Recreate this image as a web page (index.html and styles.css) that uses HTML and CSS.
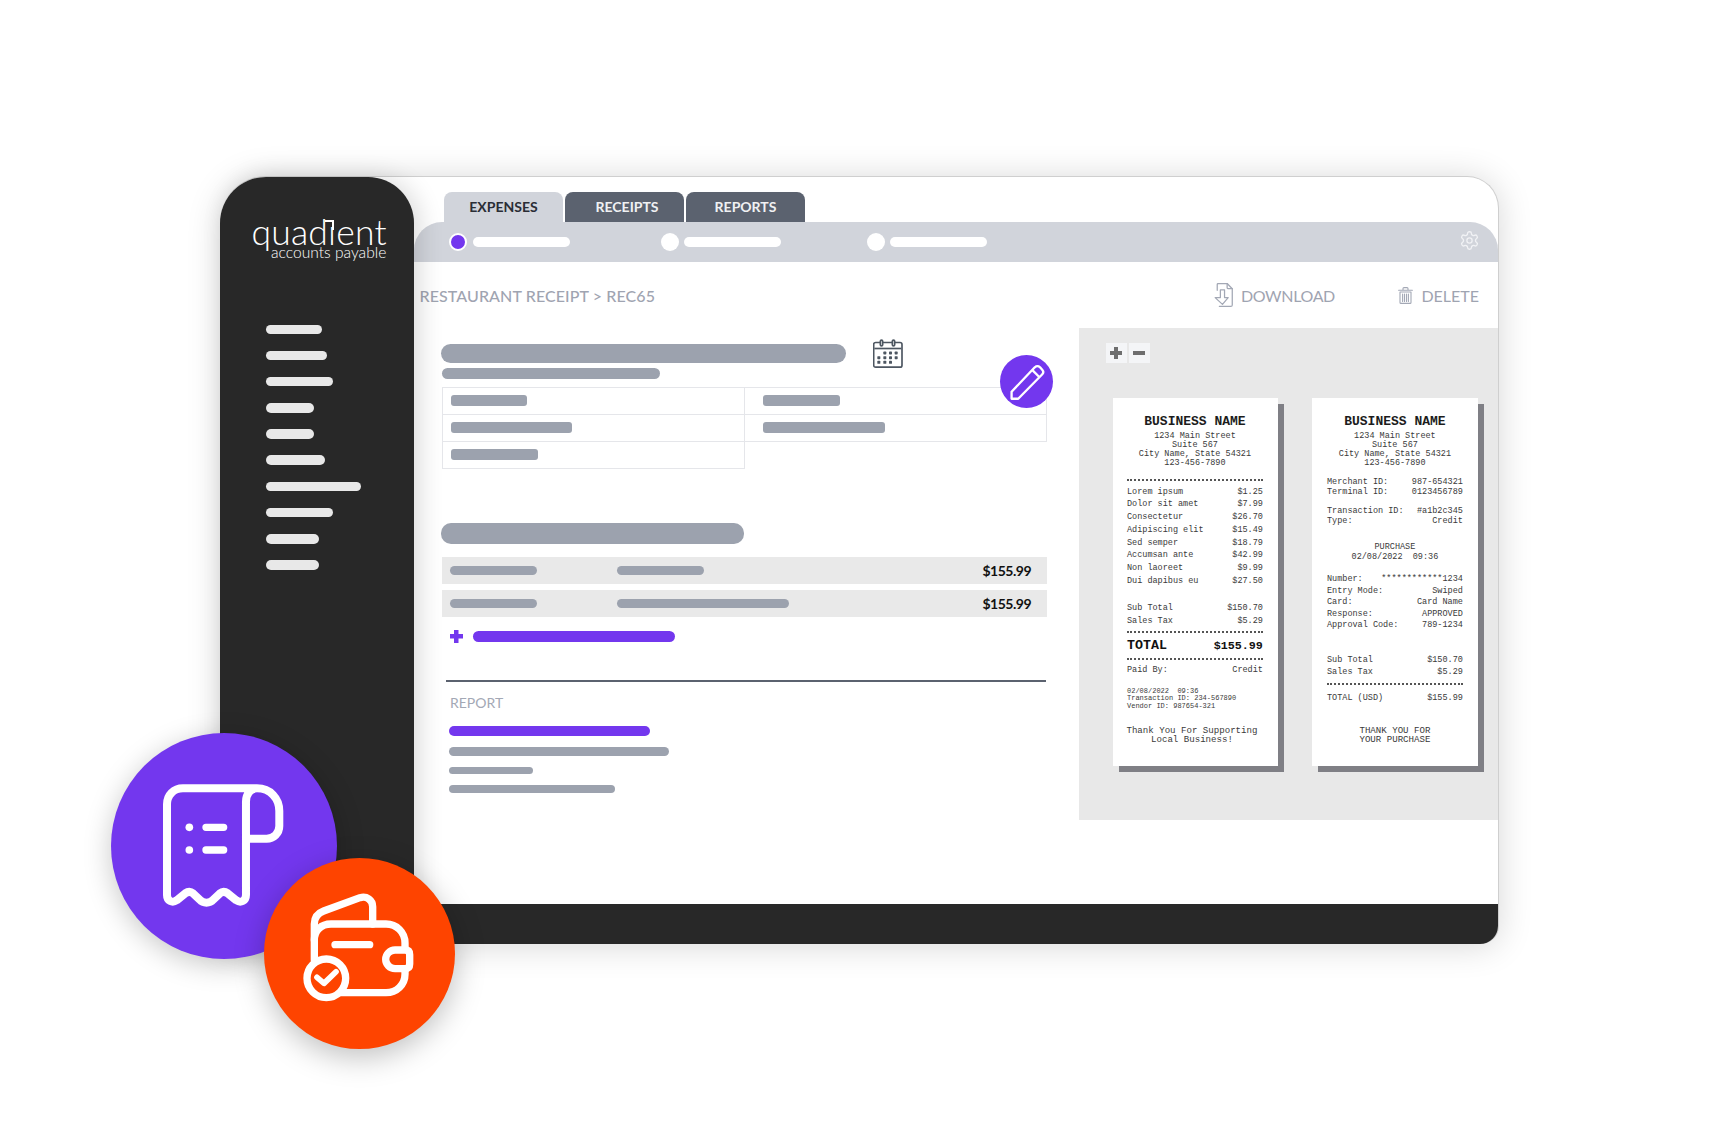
FILE: index.html
```html
<!DOCTYPE html>
<html lang="en">
<head>
<meta charset="utf-8">
<title>Quadient Accounts Payable</title>
<link rel="stylesheet" href="styles.css">
</head>
<body>
<div class="canvas">
  <div class="window">
    <aside class="sidebar">
      <div class="logo">
        <div class="logo-name">quad<span class="logo-i">ı</span>ent</div>
        <div class="logo-sub">accounts payable</div>
      </div>
      <nav class="side-nav">
        <span class="side-bar w56"></span>
        <span class="side-bar w61"></span>
        <span class="side-bar w67"></span>
        <span class="side-bar w48"></span>
        <span class="side-bar w48"></span>
        <span class="side-bar w59"></span>
        <span class="side-bar w95"></span>
        <span class="side-bar w67"></span>
        <span class="side-bar w53"></span>
        <span class="side-bar w53"></span>
      </nav>
    </aside>

    <main class="main">
      <div class="tabs">
        <div class="tab tab-active">EXPENSES</div>
        <div class="tab tab-receipts">RECEIPTS</div>
        <div class="tab">REPORTS</div>
      </div>

      <div class="stepbar">
        <div class="step"><span class="step-dot step-dot-on"></span><span class="step-line"></span></div>
        <div class="step step-second"><span class="step-dot"></span><span class="step-line"></span></div>
        <div class="step step-third"><span class="step-dot"></span><span class="step-line"></span></div>
        <svg class="gear" viewBox="0 0 24 24" fill="none" stroke="#f1f2f5" stroke-width="1.5" stroke-linecap="round" stroke-linejoin="round">
          <path d="M12.22 2h-.44a2 2 0 0 0-2 2v.18a2 2 0 0 1-1 1.73l-.43.25a2 2 0 0 1-2 0l-.15-.08a2 2 0 0 0-2.73.73l-.22.38a2 2 0 0 0 .73 2.73l.15.1a2 2 0 0 1 1 1.72v.51a2 2 0 0 1-1 1.74l-.15.09a2 2 0 0 0-.73 2.73l.22.38a2 2 0 0 0 2.73.73l.15-.08a2 2 0 0 1 2 0l.43.25a2 2 0 0 1 1 1.73V20a2 2 0 0 0 2 2h.44a2 2 0 0 0 2-2v-.18a2 2 0 0 1 1-1.73l.43-.25a2 2 0 0 1 2 0l.15.08a2 2 0 0 0 2.73-.73l.22-.39a2 2 0 0 0-.73-2.73l-.15-.08a2 2 0 0 1-1-1.74v-.5a2 2 0 0 1 1-1.74l.15-.09a2 2 0 0 0 .73-2.73l-.22-.38a2 2 0 0 0-2.73-.73l-.15.08a2 2 0 0 1-2 0l-.43-.25a2 2 0 0 1-1-1.73V4a2 2 0 0 0-2-2z"/>
          <circle cx="12" cy="12" r="3"/>
        </svg>
      </div>

      <div class="crumbs">
        <div class="crumb-text">RESTAURANT RECEIPT &gt; REC65</div>
        <div class="actions">
          <div class="action action-download">
            <svg class="icon-download" viewBox="0 0 18 23" fill="none" stroke="#a3a8b5" stroke-width="1.2" stroke-linejoin="round" stroke-linecap="round">
              <path d="M3 7V1.5a1 1 0 0 1 1-1h8.5L17.4 5.5V21a1.4 1.4 0 0 1-1.4 1.4H5"/>
              <path d="M12.5 .6V4.5a1 1 0 0 0 1 1h3.9"/>
              <path d="M6 6.5h4v7.5h3.5L8 20.5 1 14h5z"/>
            </svg>
            <span>DOWNLOAD</span>
          </div>
          <div class="action">
            <svg class="icon-trash" viewBox="0 0 15 17" fill="none" stroke="#a3a8b5" stroke-width="1.1" stroke-linejoin="round" stroke-linecap="round">
              <path d="M.6 3.2h13.8M5 3V1.6a1 1 0 0 1 1-1h3a1 1 0 0 1 1 1V3"/>
              <path d="M2 5h11v10.4a1 1 0 0 1-1 1H3a1 1 0 0 1-1-1z"/>
              <path d="M4.6 7v7.5M6.5 7v7.5M8.5 7v7.5M10.4 7v7.5"/>
            </svg>
            <span>DELETE</span>
          </div>
        </div>
      </div>

      <div class="content">
        <section class="form">
          <div class="title-row">
            <span class="bar bar-title"></span>
            <svg class="icon-calendar" viewBox="38 28 90 86" fill="none" stroke="#4d5661" stroke-width="5">
              <rect x="40" y="38" width="85" height="74" rx="6"/>
              <path d="M42 56h81"/>
              <rect x="60" y="31" width="7" height="17" rx="3.5" fill="#fff"/>
              <rect x="96" y="31" width="7" height="17" rx="3.5" fill="#fff"/>
              <g fill="#4d5661" stroke="none">
                <rect x="69" y="65" width="9" height="9" rx="2"/><rect x="86" y="65" width="9" height="9" rx="2"/><rect x="103" y="65" width="9" height="9" rx="2"/>
                <rect x="51" y="79" width="9" height="9" rx="2"/><rect x="69" y="79" width="9" height="9" rx="2"/><rect x="86" y="79" width="9" height="9" rx="2"/><rect x="103" y="79" width="9" height="9" rx="2"/>
                <rect x="51" y="93" width="9" height="9" rx="2"/><rect x="69" y="93" width="9" height="9" rx="2"/><rect x="86" y="93" width="9" height="9" rx="2"/>
              </g>
            </svg>
          </div>
          <span class="bar bar-sub"></span>

          <div class="detail-table">
            <div class="cell"><span class="bar bar-cell w76"></span></div>
            <div class="cell"><span class="bar bar-cell w77"></span></div>
            <div class="cell"><span class="bar bar-cell w121"></span></div>
            <div class="cell"><span class="bar bar-cell w122"></span></div>
            <div class="cell"><span class="bar bar-cell w87"></span></div>
          </div>
          <div class="edit-badge">
            <svg viewBox="420 75 160 160" fill="none" stroke="#fff" stroke-width="7" stroke-linejoin="round">
              <path d="M455 186 525 112q8-7 16 0l7 8q6 7-1 14L475 207h-20z"/>
              <path d="M517 120l23 23"/>
            </svg>
          </div>

          <span class="bar bar-section"></span>

          <div class="line-rows">
            <div class="line-row">
              <span class="bar bar-line w87"></span>
              <span class="bar bar-line w87 bar-line-second"></span>
              <span class="price">$155.99</span>
            </div>
            <div class="line-row">
              <span class="bar bar-line w87"></span>
              <span class="bar bar-line w172 bar-line-second"></span>
              <span class="price">$155.99</span>
            </div>
          </div>

          <div class="add-row">
            <span class="plus-icon"></span>
            <span class="bar bar-add"></span>
          </div>

          <div class="divider"></div>
          <div class="report-label">REPORT</div>
          <div class="report-list">
            <span class="bar report-purple"></span>
            <span class="bar report-a"></span>
            <span class="bar report-b"></span>
            <span class="bar report-c"></span>
          </div>
        </section>

        <section class="preview">
          <div class="zoom-btns">
            <div class="zoom-btn"><span class="zoom-plus"></span></div>
            <div class="zoom-btn"><span class="zoom-minus"></span></div>
          </div>
          <div class="receipts">
            <article class="receipt">
              <div class="r-title">BUSINESS NAME</div>
              <div class="r-address">1234 Main Street<br>Suite 567<br>City Name, State 54321<br>123-456-7890</div>
              <div class="r-dots a1"></div>
              <div class="r-items a2">
                <div class="r-row"><span>Lorem ipsum</span><span>$1.25</span></div>
                <div class="r-row"><span>Dolor sit amet</span><span>$7.99</span></div>
                <div class="r-row"><span>Consectetur</span><span>$26.70</span></div>
                <div class="r-row"><span>Adipiscing elit</span><span>$15.49</span></div>
                <div class="r-row"><span>Sed semper</span><span>$18.79</span></div>
                <div class="r-row"><span>Accumsan ante</span><span>$42.99</span></div>
                <div class="r-row"><span>Non laoreet</span><span>$9.99</span></div>
                <div class="r-row"><span>Dui dapibus eu</span><span>$27.50</span></div>
              </div>
              <div class="r-items a3">
                <div class="r-row"><span>Sub Total</span><span>$150.70</span></div>
                <div class="r-row"><span>Sales Tax</span><span>$5.29</span></div>
              </div>
              <div class="r-dots a4"></div>
              <div class="r-row r-total a5"><span class="r-total-label">TOTAL</span><span>$155.99</span></div>
              <div class="r-dots a6"></div>
              <div class="r-items a7">
                <div class="r-row"><span>Paid By:</span><span>Credit</span></div>
              </div>
              <div class="r-small a8">02/08/2022&nbsp; 09:36<br>Transaction ID: 234-567890<br>Vendor ID: 987654-321</div>
              <div class="r-thanks a9">Thank You For Supporting<br>Local Business!</div>
            </article>

            <article class="receipt">
              <div class="r-title">BUSINESS NAME</div>
              <div class="r-address">1234 Main Street<br>Suite 567<br>City Name, State 54321<br>123-456-7890</div>
              <div class="r-tight b1">
                <div class="r-row"><span>Merchant ID:</span><span>987-654321</span></div>
                <div class="r-row"><span>Terminal ID:</span><span>0123456789</span></div>
              </div>
              <div class="r-tight b2">
                <div class="r-row"><span>Transaction ID:</span><span>#a1b2c345</span></div>
                <div class="r-row"><span>Type:</span><span>Credit</span></div>
              </div>
              <div class="r-center b3">PURCHASE<br>02/08/2022&nbsp; 09:36</div>
              <div class="r-mid b4">
                <div class="r-row"><span>Number:</span><span>************1234</span></div>
                <div class="r-row"><span>Entry Mode:</span><span>Swiped</span></div>
                <div class="r-row"><span>Card:</span><span>Card Name</span></div>
                <div class="r-row"><span>Response:</span><span>APPROVED</span></div>
                <div class="r-row"><span>Approval Code:</span><span>789-1234</span></div>
              </div>
              <div class="r-mid b5">
                <div class="r-row"><span>Sub Total</span><span>$150.70</span></div>
                <div class="r-row"><span>Sales Tax</span><span>$5.29</span></div>
              </div>
              <div class="r-dots b6"></div>
              <div class="r-mid b7">
                <div class="r-row"><span>TOTAL (USD)</span><span>$155.99</span></div>
              </div>
              <div class="r-thanks b8">THANK YOU FOR<br>YOUR PURCHASE</div>
            </article>
          </div>
        </section>
      </div>
    </main>
    <div class="footer"></div>
  </div>

  <div class="badge badge-purple">
    <svg class="badge-icon-receipt" viewBox="200 180 400 400" fill="none" stroke="#fff" stroke-width="24" stroke-linecap="round" stroke-linejoin="round">
      <path d="M500 205H278c-28 0-48 20-48 48V525c0 18 16 25 29 16l26-21c8-6 16-6 23 0l20 19c11 12 30 12 41 0l20-19c7-6 15-6 23 0l26 21c13 9 29 2 29-16V245c0-22 13-40 33-40 40 0 67 30 67 68v45c0 22-17 38-38 38h-62"/>
      <path d="M347 322h53M347 390h53" stroke-width="22"/>
      <circle cx="297" cy="322" r="11.5" fill="#fff" stroke="none"/>
      <circle cx="297" cy="390" r="11.5" fill="#fff" stroke="none"/>
    </svg>
  </div>
  <div class="badge badge-orange">
    <svg class="badge-icon-wallet" viewBox="630 510 350 350" fill="none" stroke="#fff" stroke-width="22" stroke-linecap="round" stroke-linejoin="round">
      <path d="M673 720V612c0-20 12-33 28-39l109-40c20-6 38 7 38 27v52"/>
      <path d="M673 660c0-28 20-48 50-48H888c32 0 57 25 57 57v12"/>
      <path d="M945 750v12c0 32-25 56-57 56H745"/>
      <path d="M735 674h104"/>
      <path d="M915 690h30q14 0 14 14v28q0 14-14 14h-30a28 28 0 0 1 0-56z"/>
      <circle cx="709" cy="775" r="58" fill="#fe4400"/>
      <path d="M681 772l21 18 36-35" stroke-width="17"/>
    </svg>
  </div>
</div>
</body>
</html>
```
FILE: styles.css
```css
* { box-sizing: border-box; }

html, body { margin: 0; padding: 0; background: #fff; }

body { font-family: "Lato", "Liberation Sans", sans-serif; }

.canvas {
  position: relative;
  width: 1718px;
  height: 1145px;
  overflow: hidden;
  padding: 176px 0 0 220px;
  background: #fff;
}

/* window */
.window {
  display: grid;
  grid-template-columns: 194px 1fr;
  grid-template-rows: 1fr 40px;
  width: 1279px;
  height: 768px;
  background: #fff;
  border-radius: 46px 32px 18px 0;
  border-top: 1px solid #cfcfcf;
  border-right: 1px solid #cfcfcf;
  box-shadow: 0 2px 34px rgba(0, 0, 0, .16);
}

.sidebar {
  grid-row: 1 / 3;
  background: #282828;
  border-radius: 46px 46px 0 0;
  padding-top: 40px;
  box-shadow: 6px 0 24px rgba(0, 0, 0, .14);
  position: relative;
}

.logo { color: #fff; padding-left: 31.5px; width: 172px; }

.logo-name {
  font-weight: 300;
  font-size: 35.5px;
  line-height: 30px;
  height: 28px;
  letter-spacing: .2px;
}

.logo-i { position: relative; }
.logo-i::before {
  content: "";
  position: absolute;
  right: 2.5px;
  top: 10px;
  width: 7px;
  height: 8px;
  border-top: 2px solid #fff;
  border-right: 2px solid #fff;
}

.logo-sub {
  font-weight: 300;
  font-size: 15.6px;
  line-height: 14px;
  padding-left: 19.5px;
  white-space: nowrap;
}

.side-nav {
  display: flex;
  flex-direction: column;
  gap: 16.7px;
  margin: 65.5px 0 0 46px;
}

.side-bar {
  display: block;
  height: 9.5px;
  border-radius: 5px;
  background: #e8e8e8;
}

.w48 { width: 48px; }
.w53 { width: 53px; }
.w56 { width: 56px; }
.w59 { width: 59px; }
.w61 { width: 61px; }
.w67 { width: 67px; }
.w95 { width: 95px; }

/* main */
.main { padding-top: 15px; min-width: 0; }

.tabs { display: flex; gap: 2px; margin-left: 30px; height: 30px; }

.tab {
  width: 119px;
  border-radius: 8px 8px 0 0;
  background: #5b626f;
  color: #f0f1f3;
  font-size: 14px;
  font-weight: 700;
  line-height: 30px;
  text-align: center;
}

.tab-active { background: #d1d4db; color: #2a2d35; }
.tab-receipts { padding-left: 5px; }

.stepbar {
  display: flex;
  align-items: center;
  height: 40px;
  padding: 0 18px 0 35px;
  background: #d1d4db;
  border-radius: 28px 28px 0 0;
}

.step { display: flex; align-items: center; gap: 5.5px; }
.step-second { margin-left: 91px; gap: 4.5px; }
.step-third { margin-left: 86px; gap: 4.5px; }

.step-dot { width: 18px; height: 18px; border-radius: 50%; background: #fff; }
.step-dot-on { background: #7337ee; border: 2px solid #fff; }
.step-line { width: 97.5px; height: 10px; border-radius: 5px; background: #fff; }

.gear { width: 21px; height: 21px; margin: 0 0 3px auto; }

.crumbs {
  display: flex;
  align-items: center;
  justify-content: space-between;
  height: 66px;
  padding: 0 19px 0 5.5px;
  color: #9fa4b1;
  font-size: 16px;
}

.crumb-text { font-weight: 500; letter-spacing: .1px; }

.actions { display: flex; align-items: center; gap: 63.5px; }
.action { display: flex; align-items: center; gap: 8px; }
.action-download { letter-spacing: -.35px; }
.icon-download { width: 19px; height: 24px; }
.icon-trash { width: 15px; height: 17px; }

.content { display: grid; grid-template-columns: 665px 1fr; height: 492px; }

.form { position: relative; padding: 11px 0 0 27px; }

.bar { display: block; background: #9ca2ae; }

.title-row { display: flex; align-items: center; gap: 27px; height: 28px; }
.bar-title { width: 405px; height: 19px; border-radius: 9.5px; }
.icon-calendar { width: 30px; height: 29px; }
.bar-sub { width: 218px; height: 11px; border-radius: 5.5px; margin: 1px 0 0 1px; }

.detail-table {
  display: grid;
  grid-template-columns: 302px 302px;
  grid-auto-rows: 27px;
  width: 604px;
  margin: 8px 0 0 1px;
}

.cell {
  display: flex;
  align-items: center;
  padding: 0 0 1px 8px;
  margin: 0 -1px -1px 0;
  border: 1px solid #e5e6ea;
}

.cell:nth-child(even) { padding-left: 18px; }

.bar-cell { height: 10.5px; border-radius: 3px; }
.w76 { width: 76px; }
.w77 { width: 77px; }
.w87 { width: 87px; }
.w121 { width: 121px; }
.w122 { width: 122px; }
.w172 { width: 172px; }

.edit-badge {
  position: absolute;
  left: 586px;
  top: 27px;
  width: 53px;
  height: 53px;
  border-radius: 50%;
  background: #7337ee;
}

.edit-badge svg { display: block; width: 53px; height: 53px; }

.bar-section { width: 303px; height: 21px; border-radius: 10px; margin-top: 55px; }

.line-rows { display: flex; flex-direction: column; gap: 6px; margin: 13px 0 0 1px; width: 605px; }

.line-row {
  display: flex;
  align-items: center;
  height: 27px;
  padding: 0 16px 0 8px;
  background: #e9e9e9;
}

.bar-line { height: 9.5px; border-radius: 5px; }
.bar-line-second { margin-left: 80px; }
.price { margin-left: auto; font-size: 14px; font-weight: 700; letter-spacing: -.5px; color: #111; }

.add-row { display: flex; align-items: center; gap: 10px; margin: 13px 0 0 9px; }

.plus-icon {
  width: 13px;
  height: 13px;
  background:
    linear-gradient(#7337ee, #7337ee) center / 13px 4.5px no-repeat,
    linear-gradient(#7337ee, #7337ee) center / 4.5px 13px no-repeat;
}

.bar-add { width: 202px; height: 11px; border-radius: 5.5px; background: #7337ee; }

.divider { width: 600px; height: 2px; margin: 37px 0 0 5px; background: #5b626f; }

.report-label {
  margin: 12px 0 0 9px;
  font-size: 14px;
  line-height: 18px;
  color: #a3a8b5;
}

.report-list { display: flex; flex-direction: column; gap: 11px; margin: 14px 0 0 7.5px; }
.report-list .bar { border-radius: 5px; }
.report-purple { width: 201px; height: 10px; background: #7337ee; }
.report-a { width: 220px; height: 9px; }
.report-b { width: 84px; height: 7px; }
.report-c { width: 166px; height: 8px; }

/* preview */
.preview { background: #e8e8e8; padding: 15px 0 0 26.5px; }

.zoom-btns { display: flex; gap: 1.5px; }

.zoom-btn {
  display: flex;
  align-items: center;
  justify-content: center;
  width: 21.5px;
  height: 20px;
  background: #f4f5f7;
}

.zoom-plus {
  width: 12px;
  height: 12px;
  background:
    linear-gradient(#6e6e6e, #6e6e6e) center / 12px 4px no-repeat,
    linear-gradient(#6e6e6e, #6e6e6e) center / 4px 12px no-repeat;
}

.zoom-minus { width: 12px; height: 4px; background: #6e6e6e; }

.receipts { display: flex; gap: 34.6px; margin: 35px 0 0 7px; }

.receipt {
  width: 165.4px;
  height: 368px;
  padding: 17px 15px 0 14.5px;
  background: #fff;
  box-shadow: 6px 6px 0 #7f7f85;
  font-family: "Liberation Mono", monospace;
  font-size: 8.5px;
  line-height: 12.7px;
  color: #3a3a3a;
}

.r-title { font-size: 13px; font-weight: 700; line-height: 14px; text-align: center; color: #1c1c1c; }
.r-address { margin-top: 2.5px; line-height: 9px; text-align: center; }
.r-dots { border-top: 2px dotted #555; height: 0; }
.r-row { display: flex; justify-content: space-between; }
.r-total { font-size: 11.7px; font-weight: 700; line-height: 14px; color: #111; }
.r-total-label { font-size: 13.3px; }
.r-small { font-size: 7px; line-height: 7.35px; }
.r-thanks { font-size: 9.1px; line-height: 9px; text-align: center; white-space: nowrap; }
.r-tight { line-height: 9.7px; }
.r-center { line-height: 10px; text-align: center; }
.r-mid { line-height: 11.4px; }

.a1 { margin-top: 11.5px; }
.a2 { margin-top: 4.7px; }
.a3 { margin-top: 14.7px; }
.a4 { margin-top: 4px; }
.a5 { margin-top: 5.3px; }
.a6 { margin-top: 5.7px; }
.a7 { margin-top: 4px; }
.a8 { margin-top: 11px; }
.a9 { margin: 16px 0 0 -6px; }

.b1 { margin-top: 10.4px; }
.b2 { margin-top: 9.9px; }
.b3 { margin-top: 15.8px; }
.b4 { margin-top: 11.9px; }
.b5 { margin-top: 24px; }
.b6 { margin-top: 5.3px; }
.b7 { margin-top: 7.3px; }
.b8 { margin-top: 21.8px; }

.footer {
  grid-column: 2;
  grid-row: 2;
  background: #282828;
  border-radius: 0 0 18px 0;
}

/* floating badges */
.badge {
  position: absolute;
  border-radius: 50%;
}

.badge-purple {
  left: 110.5px;
  top: 732.5px;
  width: 226px;
  height: 226px;
  background: #7337ee;
  box-shadow: 0 6px 28px rgba(0, 0, 0, .22);
}

.badge-orange {
  left: 264px;
  top: 858px;
  width: 191px;
  height: 191px;
  background: #fe4400;
  box-shadow: 0 8px 30px rgba(0, 0, 0, .25);
}

.badge-icon-receipt { position: absolute; left: 46.2px; top: 47.5px; width: 133.3px; height: 133.3px; }
.badge-icon-wallet { position: absolute; left: 36px; top: 32px; width: 116.7px; height: 116.7px; }
```
